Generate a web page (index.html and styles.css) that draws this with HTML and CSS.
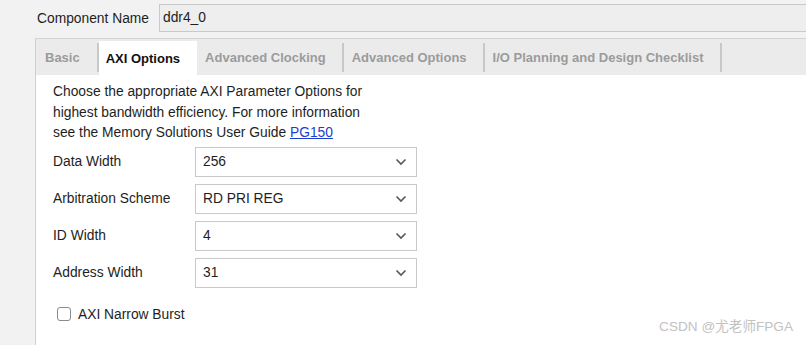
FILE: index.html
```html
<!DOCTYPE html>
<html>
<head>
    <title>DDR4 - AXI Options</title>
    <link rel="stylesheet" href="styles.css">
</head>
<body>
    <div class="name-row">
        <span class="name-label">Component Name</span>
        <div class="name-input">ddr4_0</div>
    </div>

    <div class="panel">
        <div class="tabs">
            <div class="tab first">Basic</div>
            <span class="sep"></span>
            <div class="tab active">AXI Options</div>
            <div class="tab">Advanced Clocking</div>
            <span class="sep"></span>
            <div class="tab">Advanced Options</div>
            <span class="sep"></span>
            <div class="tab">I/O Planning and Design Checklist</div>
            <span class="sep"></span>
        </div>

        <div class="content">
            <p class="intro">Choose the appropriate AXI Parameter Options for<br>
                highest bandwidth efficiency. For more information<br>
                see the Memory Solutions User Guide <a href="#">PG150</a></p>

            <div class="form">
                <label>Data Width</label>
                <div class="combo"><span>256</span><svg width="12" height="8" viewBox="0 0 12 8"><polyline points="1.5,1.5 6,6 10.5,1.5" /></svg></div>

                <label>Arbitration Scheme</label>
                <div class="combo"><span>RD PRI REG</span><svg width="12" height="8" viewBox="0 0 12 8"><polyline points="1.5,1.5 6,6 10.5,1.5" /></svg></div>

                <label>ID Width</label>
                <div class="combo"><span>4</span><svg width="12" height="8" viewBox="0 0 12 8"><polyline points="1.5,1.5 6,6 10.5,1.5" /></svg></div>

                <label>Address Width</label>
                <div class="combo"><span>31</span><svg width="12" height="8" viewBox="0 0 12 8"><polyline points="1.5,1.5 6,6 10.5,1.5" /></svg></div>
            </div>

            <div class="check-row">
                <span class="checkbox"></span>
                <span>AXI Narrow Burst</span>
            </div>
        </div>
    </div>

    <div class="watermark">CSDN @尤老师FPGA</div>
</body>
</html>
```

FILE: styles.css
```css
html, body { height: 100%; }
body {
    margin: 0;
    background: #f2f2f2;
    font-family: "Liberation Sans", Arial, sans-serif;
    font-size: 13.8px;
    color: #1e1e1e;
    overflow: hidden;
}

.name-row { display: flex; align-items: center; padding: 4px 0 0 37px; height: 28px; }
.name-label { width: 122px; }
.name-input {
    flex: 1;
    height: 26px;
    line-height: 26px;
    padding-left: 3px;
    background: #eeeeee;
    border: 1px solid #c9c9c9;
    border-right: none;
}

.panel {
    margin: 6px 0 0 35px;
    height: 306px;
    background: #ffffff;
    border-left: 1px solid #cfcfcf;
    border-top: 1px solid #d4d4d4;
}

.tabs { display: flex; align-items: stretch; height: 36px; background: #ebebeb; }
.tab {
    display: flex;
    align-items: center;
    padding: 0 16px 0 8px;
    font-size: 13px;
    font-weight: bold;
    color: #9b9b9b;
}
.tab.first { padding: 0 17px 0 9px; }
.tab.active { background: #ffffff; color: #111; margin-top: 2px; padding: 0 17px 0 7px; }
.sep { width: 2px; height: 29px; align-self: center; background: #c8c8c8; }

.content { padding: 7px 0 0 17px; }
.intro { margin: 0; line-height: 20.5px; }
.intro a { color: #1a3fd0; }

.form {
    display: grid;
    grid-template-columns: 142px 222px;
    grid-auto-rows: 30px;
    row-gap: 7px;
    margin-top: 3px;
    align-items: center;
}
.combo {
    height: 28px;
    border: 1px solid #c9c9c9;
    background: #fff;
    display: flex;
    align-items: center;
    justify-content: space-between;
    padding: 0 9px 0 7px;
}
.combo svg polyline { fill: none; stroke: #5a5a5a; stroke-width: 1.7; }

.check-row { display: flex; align-items: center; gap: 7px; margin: 19px 0 0 4px; }
.checkbox {
    width: 12px;
    height: 12px;
    border: 1px solid #8a8a8a;
    border-radius: 3px;
    background: #fff;
}

.watermark {
    position: absolute;
    right: 13px;
    bottom: 10px;
    color: #c2c2c2;
    font-family: "Liberation Sans", "Noto Sans CJK SC", sans-serif;
    font-size: 13.6px;
}
```
